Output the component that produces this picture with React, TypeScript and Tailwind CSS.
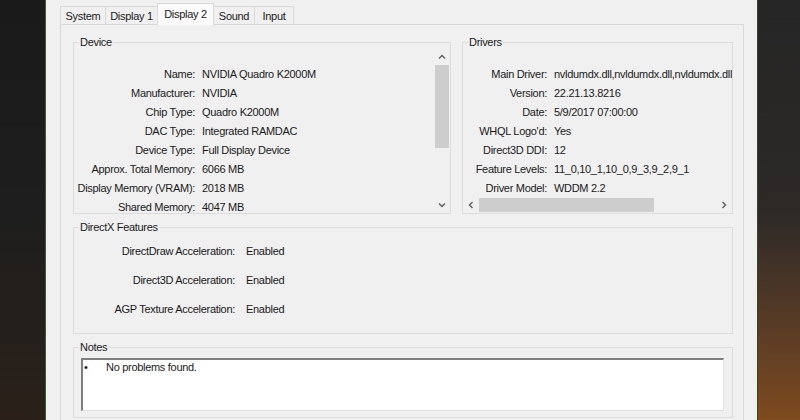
import React from 'react';

const device = [
  ['Name:', 'NVIDIA Quadro K2000M'],
  ['Manufacturer:', 'NVIDIA'],
  ['Chip Type:', 'Quadro K2000M'],
  ['DAC Type:', 'Integrated RAMDAC'],
  ['Device Type:', 'Full Display Device'],
  ['Approx. Total Memory:', '6066 MB'],
  ['Display Memory (VRAM):', '2018 MB'],
  ['Shared Memory:', '4047 MB'],
];

const drivers = [
  ['Main Driver:', 'nvldumdx.dll,nvldumdx.dll,nvldumdx.dll,nvldumdx.dll'],
  ['Version:', '22.21.13.8216'],
  ['Date:', '5/9/2017 07:00:00'],
  ["WHQL Logo'd:", 'Yes'],
  ['Direct3D DDI:', '12'],
  ['Feature Levels:', '11_0,10_1,10_0,9_3,9_2,9_1'],
  ['Driver Model:', 'WDDM 2.2'],
];

const features = [
  ['DirectDraw Acceleration:', 'Enabled'],
  ['Direct3D Acceleration:', 'Enabled'],
  ['AGP Texture Acceleration:', 'Enabled'],
];

const Chevron = ({ dir }: { dir: 'up' | 'down' | 'left' | 'right' }) => {
  const pts = {
    up: '1,5.5 4,2.5 7,5.5',
    down: '1,2.5 4,5.5 7,2.5',
    left: '5.5,1 2.5,4 5.5,7',
    right: '2.5,1 5.5,4 2.5,7',
  }[dir];
  return (
    <svg width="8" height="8" viewBox="0 0 8 8">
      <polyline points={pts} fill="none" stroke="#5f5f5f" strokeWidth="1.4" />
    </svg>
  );
};

const Group = ({ title, className = '', children }: { title: string; className?: string; children: React.ReactNode }) => (
  <fieldset className={`border border-[#dcdcdc] min-w-0 ${className}`}>
    <legend className="ml-[5px] px-[1px] leading-[14px]">{title}</legend>
    {children}
  </fieldset>
);

const Tab = ({ label, w, cls = '' }: { label: string; w: string; cls?: string }) => (
  <div className={`h-[18px] ${w} border-t border-l border-[#d9d9d9] flex items-center justify-center leading-[14px] ${cls}`}>
    {label}
  </div>
);

export default function App() {
  return (
    <div className="w-[800px] h-[420px] overflow-hidden flex font-['Liberation_Sans',Arial,sans-serif] text-[11px] tracking-[-0.3px] text-[#1a1a1a]">
      <div className="w-[46px] h-full border-r border-[#3f5c36] bg-linear-to-b from-[#1a1a1a] via-[#1e1e1e] to-[#2a2019]" />

      <div className="w-[711px] h-full bg-[#f0f0f0] pl-[14px]">
        {/* tabs */}
        <div className="flex items-end h-[18px] mt-[6px]">
          <Tab label="System" w="w-[45px]" />
          <Tab label="Display 1" w="w-[52px]" />
          <div className="h-[22px] w-[57px] -mb-px relative z-10 bg-[#fbfbfb] border-t border-x border-[#d9d9d9] flex items-start justify-center pt-[3px] leading-[14px]">
            Display 2
          </div>
          <Tab label="Sound" w="w-[40px]" cls="border-l-0" />
          <Tab label="Input" w="w-[40px]" cls="border-r" />
        </div>

        {/* tab page */}
        <div className="w-[684px] h-[420px] border border-[#d9d9d9] bg-[#f0f0f0] pt-[10px] pl-[12px] pr-[10px]">
          <div className="flex gap-[11px]">
            <Group title="Device" className="w-[378px]">
              <div className="h-[164px] flex">
                <div className="flex-1 overflow-hidden pt-[16px]">
                  {device.map(([k, v]) => (
                    <div key={k} className="flex h-[19px] leading-[19px] whitespace-nowrap">
                      <div className="w-[121px] text-right">{k}</div>
                      <div className="ml-[7px]">{v}</div>
                    </div>
                  ))}
                </div>
                <div className="w-[16px] flex flex-col">
                  <div className="h-[16px] flex items-center justify-center"><Chevron dir="up" /></div>
                  <div className="h-[83px] mx-[1px] bg-[#cdcdcd]" />
                  <div className="flex-1" />
                  <div className="h-[16px] flex items-center justify-center"><Chevron dir="down" /></div>
                </div>
              </div>
            </Group>

            <Group title="Drivers" className="flex-1">
              <div className="h-[164px] flex flex-col">
                <div className="flex-1 overflow-hidden pt-[16px]">
                  {drivers.map(([k, v]) => (
                    <div key={k} className="flex h-[19px] leading-[19px] whitespace-nowrap">
                      <div className="w-[84px] shrink-0 text-right">{k}</div>
                      <div className="ml-[7px]">{v}</div>
                    </div>
                  ))}
                </div>
                <div className="h-[16px] flex">
                  <div className="w-[16px] flex items-center justify-center"><Chevron dir="left" /></div>
                  <div className="w-[175px] my-[1px] bg-[#cdcdcd]" />
                  <div className="flex-1" />
                  <div className="w-[16px] flex items-center justify-center"><Chevron dir="right" /></div>
                </div>
              </div>
            </Group>
          </div>

          <Group title="DirectX Features" className="mt-[6px]">
            <div className="h-[99px] pt-[8px] flex flex-col gap-[10px]">
              {features.map(([k, v]) => (
                <div key={k} className="flex h-[19px] leading-[19px]">
                  <div className="w-[161px] text-right">{k}</div>
                  <div className="ml-[11px]">{v}</div>
                </div>
              ))}
            </div>
          </Group>

          <Group title="Notes" className="mt-[6px]">
            <div className="pt-[4px] pb-[6px] pl-[7px] pr-[8px]">
              <div className="h-[53px] bg-white border-t-2 border-l-2 border-r border-b border-t-[#7f7f7f] border-l-[#7f7f7f] border-r-[#e0e0e0] border-b-[#e0e0e0] pl-[1px] flex leading-[14px]">
                <div className="w-[22px]">•</div>
                <div>No problems found.</div>
              </div>
            </div>
          </Group>
        </div>
      </div>

      <div className="flex-1 h-full border-l border-[#33452c] bg-linear-to-b from-[#262626] via-[#2c2927] to-[#7e4a1e]" />
    </div>
  );
}
